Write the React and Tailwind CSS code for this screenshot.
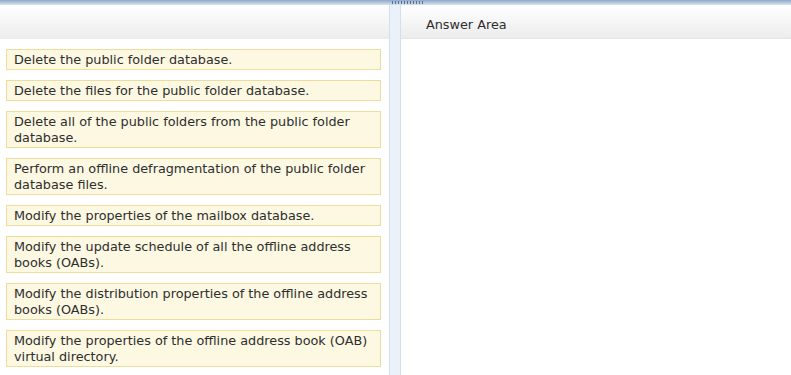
const items = [
  "Delete the public folder database.",
  "Delete the files for the public folder database.",
  "Delete all of the public folders from the public folder database.",
  "Perform an offline defragmentation of the public folder database files.",
  "Modify the properties of the mailbox database.",
  "Modify the update schedule of all the offline address books (OABs).",
  "Modify the distribution properties of the offline address books (OABs).",
  "Modify the properties of the offline address book (OAB) virtual directory.",
];

export default function App() {
  return (
    <div className="w-[791px] h-[375px] overflow-hidden bg-white flex flex-col text-[12.8px] leading-4 text-[#2e2e2e]" style={{ fontFamily: '"DejaVu Sans", Verdana, sans-serif' }}>
      {/* top bar */}
      <div className="h-[5px] shrink-0 bg-gradient-to-b from-[#8fa9c9] to-[#d8e4f2] flex">
        <div className="ml-[392px] mt-[1px] flex gap-[2px]">
          {Array.from({ length: 11 }).map((_, i) => (
            <span key={i} className="w-px h-[3px] bg-[#5a6f96]" />
          ))}
        </div>
      </div>
      <div className="flex flex-1 min-h-0">
        {/* left panel */}
        <div className="w-[389px] shrink-0 flex flex-col">
          <div className="h-[34px] shrink-0 bg-gradient-to-b from-white to-[#ececec]" />
          <div className="flex flex-col gap-[10px] pt-[10px] pl-[6px] pr-[8px]">
            {items.map((t) => (
              <div key={t} className="bg-[#fcf8e2] border border-[#ecdd9c] pl-[7px] pr-0 pt-[2px] pb-[1px]">
                {t}
              </div>
            ))}
          </div>
        </div>
        {/* divider */}
        <div className="w-[12px] shrink-0 bg-[#eaf1f9] border-l border-r border-[#d3dfec]" />
        {/* right panel */}
        <div className="flex-1 flex flex-col">
          <div className="h-[34px] shrink-0 bg-gradient-to-b from-white to-[#ececec] border-b border-[#e4e4e4] pl-[25px] pt-[12px]">
            Answer Area
          </div>
        </div>
      </div>
    </div>
  );
}
